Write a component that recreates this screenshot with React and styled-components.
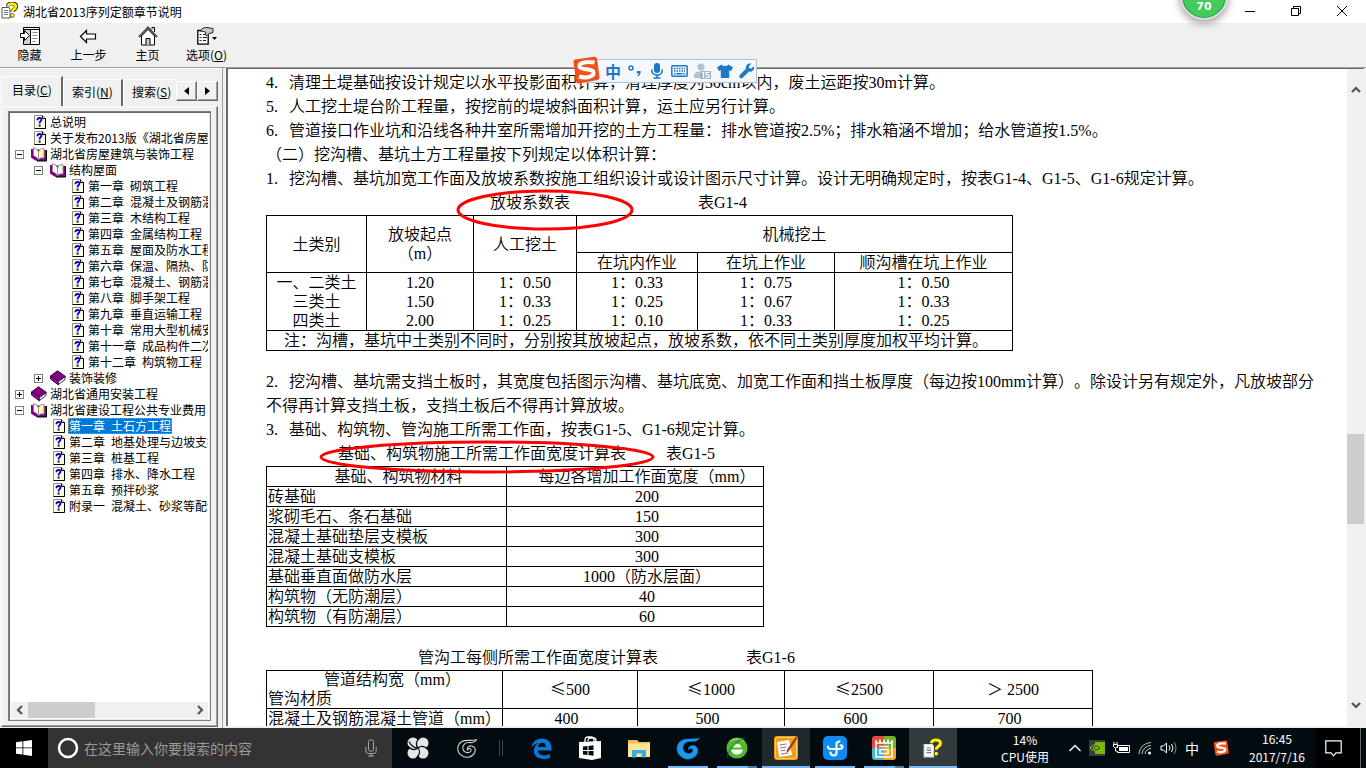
import React, { useState } from "react";
import styled, { createGlobalStyle, css } from "styled-components";

const UI_FONT = `"Noto Sans CJK SC", sans-serif`;
const DOC_FONT = `"Liberation Serif", "Noto Sans CJK SC", serif`;

const tree = [
  { level: 0, type: "page", text: "总说明" },
  { level: 0, type: "page", text: "关于发布2013版《湖北省房屋建筑" },
  { level: 0, type: "open", text: "湖北省房屋建筑与装饰工程" },
  { level: 1, type: "open", text: "结构屋面" },
  { level: 2, type: "page", text: "第一章\u2002砌筑工程" },
  { level: 2, type: "page", text: "第二章\u2002混凝土及钢筋混凝土" },
  { level: 2, type: "page", text: "第三章\u2002木结构工程" },
  { level: 2, type: "page", text: "第四章\u2002金属结构工程" },
  { level: 2, type: "page", text: "第五章\u2002屋面及防水工程" },
  { level: 2, type: "page", text: "第六章\u2002保温、隔热、防腐" },
  { level: 2, type: "page", text: "第七章\u2002混凝土、钢筋混凝土" },
  { level: 2, type: "page", text: "第八章\u2002脚手架工程" },
  { level: 2, type: "page", text: "第九章\u2002垂直运输工程" },
  { level: 2, type: "page", text: "第十章\u2002常用大型机械安拆" },
  { level: 2, type: "page", text: "第十一章\u2002成品构件二次" },
  { level: 2, type: "page", text: "第十二章\u2002构筑物工程" },
  { level: 1, type: "closed", text: "装饰装修" },
  { level: 0, type: "closed", text: "湖北省通用安装工程" },
  { level: 0, type: "open", text: "湖北省建设工程公共专业费用" },
  { level: 1, type: "page", text: "第一章\u2002土石方工程" },
  { level: 1, type: "page", text: "第二章\u2002地基处理与边坡支护" },
  { level: 1, type: "page", text: "第三章\u2002桩基工程" },
  { level: 1, type: "page", text: "第四章\u2002排水、降水工程" },
  { level: 1, type: "page", text: "第五章\u2002预拌砂浆" },
  { level: 1, type: "page", text: "附录一\u2002混凝土、砂浆等配合" },
];

const widthRows = [
  ["砖基础", "200"],
  ["浆砌毛石、条石基础", "150"],
  ["混凝土基础垫层支模板", "300"],
  ["混凝土基础支模板", "300"],
  ["基础垂直面做防水层", "1000（防水层面）"],
  ["构筑物（无防潮层）", "40"],
  ["构筑物（有防潮层）", "60"],
];

const slopeCells = [
  ["一、二类土", "三类土", "四类土"],
  ["1.20", "1.50", "2.00"],
  ["1：0.50", "1：0.33", "1：0.25"],
  ["1：0.33", "1：0.25", "1：0.10"],
  ["1：0.75", "1：0.67", "1：0.33"],
  ["1：0.50", "1：0.33", "1：0.25"],
];

export default function App() {
  const [selected, setSelected] = useState(19);
  const [tab, setTab] = useState(0);
  return (
    <Desktop lang="zh-CN">
      <GlobalStyle />
      <TitleBar>
        <HelpIcon size={17} />
        <TitleText>湖北省2013序列定额章节说明</TitleText>
        <WindowButton aria-label="最小化">
          <svg width="10" height="10" viewBox="0 0 10 10">
            <path d="M0 5.5h10" stroke="#000" />
          </svg>
        </WindowButton>
        <WindowButton aria-label="还原">
          <svg width="10" height="10" viewBox="0 0 10 10" fill="none" stroke="#000">
            <path d="M.5 2.5h7v7h-7zM2.5 2.5v-2h7v7h-2" />
          </svg>
        </WindowButton>
        <WindowButton aria-label="关闭">
          <svg width="10" height="10" viewBox="0 0 10 10" stroke="#000">
            <path d="M0 0l10 10M10 0L0 10" />
          </svg>
        </WindowButton>
      </TitleBar>
      <SpeedBall>70</SpeedBall>

      <Toolbar>
        <ToolButton>
          <HideIcon />
          隐藏
        </ToolButton>
        <ToolButton>
          <BackIcon />
          上一步
        </ToolButton>
        <ToolButton>
          <HomeIcon />
          主页
        </ToolButton>
        <ToolButton>
          <OptionsIcon />
          <span>
            选项(<u>O</u>)
          </span>
        </ToolButton>
      </Toolbar>

      <Body>
        <Sidebar>
          <Tabs>
            {[
              ["目录", "C"],
              ["索引", "N"],
              ["搜索", "S"],
            ].map(([name, key], i) => (
              <Tab key={key} $active={tab === i} onClick={() => setTab(i)}>
                {name}(<u>{key}</u>)
              </Tab>
            ))}
            <TabScroll aria-label="向左">
              <svg width="5" height="8" viewBox="0 0 5 8">
                <path d="M5 0v8L0 4z" />
              </svg>
            </TabScroll>
            <TabScroll aria-label="向右">
              <svg width="5" height="8" viewBox="0 0 5 8">
                <path d="M0 0v8l5-4z" />
              </svg>
            </TabScroll>
          </Tabs>
          <Panel>
            <TreeBox>
              <Tree>
                {tree.map((item, i) => (
                  <TreeRow key={i} $level={item.level}>
                    <Expander $hidden={item.type === "page"}>
                      <svg width="5" height="5" viewBox="0 0 5 5" stroke="#000">
                        <path d={item.type === "closed" ? "M0 2.5h5M2.5 0v5" : "M0 2.5h5"} />
                      </svg>
                    </Expander>
                    <TreeIcon type={item.type} />
                    <TreeLink href="#doc" $selected={selected === i} onClick={() => setSelected(i)}>
                      {item.text}
                    </TreeLink>
                  </TreeRow>
                ))}
              </Tree>
              <HScroll>
                <ScrollArrow d="M6 0L2 4l4 4" />
                <HTrack>
                  <HThumb />
                </HTrack>
                <ScrollArrow d="M2 0l4 4-4 4" />
              </HScroll>
            </TreeBox>
          </Panel>
        </Sidebar>
        <Splitter />
        <DocFrame>
          <Doc id="doc">
            <Line>
              <Num>4.</Num>清理土堤基础按设计规定以水平投影面积计算，清理厚度为30cm以内，废土运距按30m计算。
            </Line>
            <Line>
              <Num>5.</Num>人工挖土堤台阶工程量，按挖前的堤坡斜面积计算，运土应另行计算。
            </Line>
            <Line>
              <Num>6.</Num>管道接口作业坑和沿线各种井室所需增加开挖的土方工程量：排水管道按2.5%；排水箱涵不增加；给水管道按1.5%。
            </Line>
            <Line>（二）挖沟槽、基坑土方工程量按下列规定以体积计算：</Line>
            <Line>
              <Num>1.</Num>挖沟槽、基坑加宽工作面及放坡系数按施工组织设计或设计图示尺寸计算。设计无明确规定时，按表G1-4、G1-5、G1-6规定计算。
            </Line>
            <Caption $indent={224} $gap={128}>
              <span>放坡系数表</span>
              <span>表G1-4</span>
              <Ring $left={190} width="178" height="42" viewBox="0 0 178 42">
                <ellipse cx="89" cy="21" rx="87" ry="19" />
              </Ring>
            </Caption>
            <Table $width={747}>
              <colgroup>
                <Col $w={100} />
                <Col $w={107} />
                <Col $w={103} />
                <Col $w={121} />
                <Col $w={137} />
                <Col />
              </colgroup>
              <tbody>
                <Row $h={37}>
                  <Cell rowSpan={2}>土类别</Cell>
                  <Cell rowSpan={2}>
                    放坡起点
                    <br />
                    （m）
                  </Cell>
                  <Cell rowSpan={2}>人工挖土</Cell>
                  <Cell colSpan={3}>机械挖土</Cell>
                </Row>
                <Row $h={20}>
                  <Cell>在坑内作业</Cell>
                  <Cell>在坑上作业</Cell>
                  <Cell>顺沟槽在坑上作业</Cell>
                </Row>
                <Row $h={58}>
                  {slopeCells.map((lines, i) => (
                    <Cell key={i}>
                      {lines.map((line) => (
                        <div key={line}>{line}</div>
                      ))}
                    </Cell>
                  ))}
                </Row>
                <Row $h={20}>
                  <Cell colSpan={6} $left $indent={16}>
                    注：沟槽，基坑中土类别不同时，分别按其放坡起点，放坡系数，依不同土类别厚度加权平均计算。
                  </Cell>
                </Row>
              </tbody>
            </Table>
            <Spacer />
            <Line>
              <Num>2.</Num>挖沟槽、基坑需支挡土板时，其宽度包括图示沟槽、基坑底宽、加宽工作面和挡土板厚度（每边按100mm计算）。除设计另有规定外，凡放坡部分不得再计算支挡土板，支挡土板后不得再计算放坡。
            </Line>
            <Line>
              <Num>3.</Num>基础、构筑物、管沟施工所需工作面，按表G1-5、G1-6规定计算。
            </Line>
            <Caption $indent={72} $gap={40}>
              <span>基础、构筑物施工所需工作面宽度计算表</span>
              <span>表G1-5</span>
              <Ring $left={53} width="336" height="34" viewBox="0 0 336 34">
                <ellipse cx="168" cy="17" rx="166" ry="15" />
              </Ring>
            </Caption>
            <Table $width={498}>
              <colgroup>
                <Col $w={240} />
                <Col />
              </colgroup>
              <tbody>
                <Row $h={20}>
                  <Cell $indent={24}>基础、构筑物材料</Cell>
                  <Cell $indent={24}>每边各增加工作面宽度（mm）</Cell>
                </Row>
                {widthRows.map(([name, value]) => (
                  <Row key={name} $h={20}>
                    <Cell $left>{name}</Cell>
                    <Cell $indent={24}>{value}</Cell>
                  </Row>
                ))}
              </tbody>
            </Table>
            <Spacer />
            <Caption $indent={152} $gap={88}>
              <span>管沟工每侧所需工作面宽度计算表</span>
              <span>表G1-6</span>
            </Caption>
            <Table $width={827}>
              <colgroup>
                <Col $w={236} />
                <Col $w={135} />
                <Col $w={147} />
                <Col $w={149} />
                <Col />
              </colgroup>
              <tbody>
                <Row $h={38}>
                  <Cell $left>
                    <Shifted>管道结构宽（mm）</Shifted>
                    <div>管沟材质</div>
                  </Cell>
                  <Cell>
                    <Sign>≤</Sign>500
                  </Cell>
                  <Cell>
                    <Sign>≤</Sign>1000
                  </Cell>
                  <Cell>
                    <Sign>≤</Sign>2500
                  </Cell>
                  <Cell>
                    <Sign>＞</Sign> 2500
                  </Cell>
                </Row>
                <Row $h={20}>
                  <Cell $left>混凝土及钢筋混凝土管道（mm）</Cell>
                  <Cell $trail={8}>400</Cell>
                  <Cell $trail={8}>500</Cell>
                  <Cell $trail={8}>600</Cell>
                  <Cell $trail={8}>700</Cell>
                </Row>
              </tbody>
            </Table>
          </Doc>
          <VScroll>
            <ScrollArrow d="M0 6l4-4 4 4" />
            <VTrack>
              <VThumb />
            </VTrack>
            <ScrollArrow d="M0 2l4 4 4-4" />
          </VScroll>
        </DocFrame>
      </Body>

      <ImeBar>
        <ImeLogo>
          <SogouIcon size={28} />
        </ImeLogo>
        <ImeText>中</ImeText>
        <svg width="16" height="16" viewBox="0 0 16 16" fill="none" stroke="#1c78c8">
          <circle cx="4" cy="5" r="2" strokeWidth="1.5" />
          <path d="M10 8h3.6c.4 2.600-.8 4.600-3 5.500l-.4-.9c1-.5 1.600-1.200 1.700-2.100H10z" fill="#1c78c8" stroke="none" />
        </svg>
        <svg width="16" height="16" viewBox="0 0 16 16" fill="none" stroke="#1c78c8" strokeWidth="1.600">
          <rect x="5" y="0" width="6" height="10" rx="3" fill="#1c78c8" stroke="none" />
          <path d="M2.800 6.500v1a5.200 4.500 0 0 0 10.400 0v-1M8 12v3M4.500 15h7" />
        </svg>
        <svg width="17" height="16" viewBox="0 0 17 16" fill="none" stroke="#1c78c8" strokeWidth="1.500">
          <rect x=".8" y="2.800" width="15.400" height="10.400" rx="1" />
          <path d="M3 5.500h11M3 8h11" strokeDasharray="1.500 1" />
          <path d="M3 10.800h1.500M5.500 10.800h6M12.500 10.800H14" />
        </svg>
        <svg width="17" height="16" viewBox="0 0 17 16" fill="#b3bfd3">
          <circle cx="7" cy="4" r="3.600" />
          <path d="M0 15c0-4 1-6 4-6.500l3 1.500 3-1.500 1 .5H6v6z" />
          <rect x="6" y="8" width="11" height="8" fill="#a4b2ca" />
          <path d="M8 9.500h1.500V15M15.500 9.500h-3.500v2.500h3v2.500h-3.500" stroke="#fff" fill="none" strokeWidth="1.200" />
        </svg>
        <svg width="16" height="16" viewBox="0 0 16 16" fill="#1c78c8">
          <path d="M4.500 1.500c1.500 2 5.500 2 7 0L16 4.500 14 8l-1.800-.8V15H3.800V7.200L2 8 0 4.500z" />
        </svg>
        <svg width="16" height="16" viewBox="0 0 16 16" fill="#1c78c8">
          <path d="M14.800 3.200l-2.600 2.500-2-.6-.5-1.900L12.300.8C9.500-.2 6.300 2 7.100 5.600L.8 11.900c-1.700 2 1 4.600 2.900 2.900L10 8.600c3.400.8 6-2.200 4.800-5.400z" />
        </svg>
      </ImeBar>

      <Taskbar>
        <StartButton aria-label="开始">
          <svg width="16" height="16" viewBox="0 0 16 16" fill="#fff">
            <path d="M0 2.200L6.500 1.300v6.200H0zM7.300 1.200L16 0v7.500H7.300zM0 8.300h6.500v6.300L0 13.700zM7.300 8.300H16V16l-8.700-1.200z" />
          </svg>
        </StartButton>
        <SearchBox>
          <svg width="22" height="22" viewBox="0 0 22 22" fill="none" stroke="#fff" strokeWidth="2.500">
            <circle cx="11" cy="11" r="9" />
          </svg>
          <SearchInput placeholder="在这里输入你要搜索的内容" aria-label="搜索" />
          <svg width="12" height="18" viewBox="0 0 12 18" fill="none" stroke="#a5a5a5">
            <rect x="3.500" y="1" width="5" height="11" rx="1.500" />
            <path d="M.8 8v4q0 2.500 2.500 2.500h5.400q2.500 0 2.500-2.500V8M6 14.500V17M3 17h6" />
          </svg>
        </SearchBox>
        <TaskIcons>
          <TaskButton aria-label="风扇">
            <svg width="22" height="22" viewBox="0 0 22 22">
              <g fill="#e6e6e6">
                <circle cx="6" cy="6" r="5.500" />
                <circle cx="16" cy="6" r="5.500" />
                <circle cx="16" cy="16" r="5.500" />
                <circle cx="6" cy="16" r="5.500" />
                <path d="M5 5h12v12H5z" />
              </g>
              <path d="M11 11Q7 6 13 .5M11 11q5-4 10.500 2M11 11q4 5-2 10.500M11 11Q6 15 .5 9M11 11Q5 11 2 4.500" fill="none" stroke="#020c10" strokeWidth="1.200" />
            </svg>
          </TaskButton>
          <TaskButton aria-label="广联达">
            <GlodonIcon size={20} outline />
          </TaskButton>
          <Grip />
          <TaskButton aria-label="Edge">
            <svg width="21" height="21" viewBox="0 0 21 21" fill="#0b78d7">
              <path d="M.5 9.500C1.500 4 5 .5 10.800.5c6 0 9.700 4 9.700 9.500v2.500H7c.2 3.300 2.800 4.900 6 4.900 2.300 0 4.200-.6 6-1.700v4C17.300 20.600 15 21 12.500 21 7 21 2.800 17.900 2.800 12.600c0-3.500 2-6.300 5-7.700C4.600 5.200 2 6.800.5 9.500zM7.100 9h7.700c0-2.800-1.200-4.300-3.600-4.300C8.800 4.700 7.300 6.600 7.100 9z" />
            </svg>
          </TaskButton>
          <TaskButton aria-label="应用商店">
            <svg width="22" height="24" viewBox="0 0 22 24">
              <path d="M0 6l22-1v17l-9 2L0 22z" fill="#fff" />
              <path d="M6 9V4q0-3 3-3h3q3 0 3 3v5M9 5q0-3 2-3h4q2 0 2 3v4" fill="none" stroke="#fff" strokeWidth="1.300" />
              <path d="M4 10.500l4.500-.5v4H4zM9.500 9.900l5-.6V14h-5zM4 15h4.500v4L4 18.500zM9.500 15h5v4.700l-5-.6z" fill="#020c10" />
            </svg>
          </TaskButton>
          <TaskButton aria-label="文件资源管理器">
            <svg width="22" height="19" viewBox="0 0 22 19">
              <path d="M0 1h9l2 2h11v15H0z" fill="#f3bf55" />
              <path d="M0 4.500h22V18H0z" fill="#ffe598" />
              <path d="M4 18.500V11h14v7.500h-4.500V14.500h-5v4z" fill="#34aee2" />
            </svg>
          </TaskButton>
          <TaskButton aria-label="广联达计价" $run>
            <GlodonIcon size={24} />
          </TaskButton>
          <TaskButton aria-label="浏览器" $run $stack>
            <svg width="24" height="24" viewBox="0 0 24 24">
              <circle cx="12" cy="12" r="10.500" fill="#55b92f" />
              <path d="M4 6a10 9 0 0 1 16 0q-8-5-16 0z" fill="#9be46e" />
              <path d="M7.500 11.500a4.600 4.600 0 0 1 9 0zM6 13.500h12c-.5 3-3 5-6 5s-5.500-2-6-5z" fill="#f4fff0" />
              <path d="M22 1C13 1 1 12 2 23c2-8 9-17 20-22z" fill="#178a2b" opacity=".6" />
            </svg>
          </TaskButton>
          <TaskButton aria-label="编辑器" $run $tile="#202a2d">
            <svg width="24" height="24" viewBox="0 0 24 24">
              <rect width="24" height="24" rx="3" fill="#f29a19" />
              <rect x="1.500" y="1.500" width="21" height="21" rx="2" fill="none" stroke="#ffd36a" />
              <path d="M3 6l12-2 3 15-13 2z" fill="#fff" />
              <path d="M5.500 9l7-1M6 12l6-1M6.500 15l5-1M7 18l7-1" stroke="#8b7a62" />
              <path d="M21.500 1l2 1L15 15l-2.500 2 .5-3z" fill="#a53618" />
            </svg>
          </TaskButton>
          <TaskButton aria-label="同步" $run>
            <svg width="24" height="24" viewBox="0 0 24 24">
              <rect width="24" height="24" rx="5" fill="#0c8cf0" />
              <path d="M7.500 16.500q.5 3 3.500 3 2.500 0 2.500-3V8q0-2.500 3-2.500M5 10.500q0 2.500 3 2.500h8.500q3 0 3-2.500-.5-1.500-2-1" fill="none" stroke="#fff" strokeWidth="2" strokeLinecap="round" />
            </svg>
          </TaskButton>
          <TaskButton aria-label="图集" $run $stack>
            <svg width="24" height="24" viewBox="0 0 24 24">
              <path d="M0 3q0-3 3-3h9v12H0z" fill="#e34b3d" />
              <path d="M12 0h9q3 0 3 3v9H12z" fill="#6fb52c" />
              <path d="M0 12h12v12H3q-3 0-3-3z" fill="#44b7cf" />
              <path d="M12 12h12v9q0 3-3 3h-9z" fill="#f6a51c" />
              <path d="M4 4v17h16V4M4 7h16M8 3.500V7M12 3.500V7M16 3.500V7M7 10.500h10M8 13.500h8v4H8z" fill="none" stroke="#fff" strokeWidth="1.600" />
            </svg>
          </TaskButton>
          <TaskButton aria-label="帮助" $run $tile="#343b3f">
            <HelpIcon size={20} dark />
          </TaskButton>
        </TaskIcons>
        <CpuMeter>
          <span>14%</span>
          <span>CPU使用</span>
        </CpuMeter>
        <Tray>
          <svg width="12" height="8" viewBox="0 0 12 8" fill="none" stroke="#fff" strokeWidth="1.400">
            <path d="M.5 7L6 1.500 11.500 7" />
          </svg>
          <svg width="16" height="16" viewBox="0 0 16 16">
            <rect width="16" height="16" fill="#383d40" />
            <path d="M6 2h10v12H6z" fill="#76b900" />
            <path d="M1 8q5-7 12 0-6 6-12 0zM4 8q3-4 6 0-3 3-6 0z" fill="none" stroke="#8ed000" />
            <path d="M6 6q3-1 5 2-2 2-5 2" fill="none" stroke="#26340a" />
          </svg>
          <svg width="17" height="12" viewBox="0 0 17 12" fill="none" stroke="#fff">
            <path d="M4.500 6V3.500h12v7h-12V9" />
            <rect x="6" y="5" width="9" height="4" fill="#fff" stroke="none" />
            <path d="M1 0v3M4 0v3M.5 2.500h4v2l-2 1.500-2-1.500zM2.500 6v3H4" />
          </svg>
          <svg width="14" height="14" viewBox="0 0 14 14" fill="none" stroke="#bfc4c6">
            <path d="M1 13A12 12 0 0 1 13 1.500M4 13a9 9 0 0 1 9-8.500M7 13a6 6 0 0 1 6-5.500" />
            <circle cx="11.500" cy="12" r="1.500" fill="#fff" stroke="none" />
          </svg>
          <svg width="17" height="14" viewBox="0 0 17 14" fill="none" stroke="#fff">
            <path d="M1 5h2.500L6.500 2v10L3.500 9H1z" />
            <path d="M9 4.500q2 2.500 0 5M11.500 3q3 4 0 8" />
            <path d="M14 1q4 6 0 12" stroke="#888" />
          </svg>
          <TrayText>中</TrayText>
          <SogouIcon size={16} />
        </Tray>
        <Clock>
          <span>16:45</span>
          <span>2017/7/16</span>
        </Clock>
        <ActionButton aria-label="操作中心">
          <svg width="17" height="17" viewBox="0 0 17 17" fill="none" stroke="#fff" strokeWidth="1.200">
            <path d="M.8.8h15.400v12H11l-2.500 3-2.500-3H.8z" />
          </svg>
        </ActionButton>
      </Taskbar>
    </Desktop>
  );
}

function HelpIcon({ size, dark }) {
  return (
    <svg width={size} height={size} viewBox="0 0 17 17">
      <path d="M1 5.500h7l1 2V16H1z" fill="#fff" stroke={dark ? "#ddd" : "#555"} />
      <path d="M3 8.500h4M3 10.500h4M3 12.500h4" stroke="#777" />
      <path d="M7 4.500Q7 1.500 11 1.500t4 3q0 2-2 3-1.500.8-1.500 2.500" fill="none" stroke="#333" strokeWidth="4.200" />
      <path d="M7.200 4.500Q7.200 1.700 11 1.700t3.800 2.800q0 1.800-2 2.900-1.500.8-1.500 2.600" fill="none" stroke="#ffee00" strokeWidth="2.600" />
      <circle cx="11.300" cy="13.500" r="2.200" fill="#333" />
      <circle cx="11.300" cy="13.300" r="1.600" fill="#ffee00" />
    </svg>
  );
}

function HideIcon() {
  return (
    <svg width="20" height="20" viewBox="0 0 20 20">
      <path d="M3.500 1.500h16v17h-16z" fill="#fff" stroke="#000" />
      <path d="M4 4h6v14H4z" fill="#d0d0d0" />
      <path d="M3 3.500h16M10.500 3v15" stroke="#000" />
      <path d="M12.500 6.500h5M12.500 9.500h5M12.500 12.500h5M12.500 15.500h3" stroke="#888" />
      <path d="M.5 7.500h4v-3l5 5-5 5v-3h-4z" fill="#fff" stroke="#000" />
    </svg>
  );
}

function BackIcon() {
  return (
    <svg width="20" height="20" viewBox="0 0 20 20">
      <path d="M1.500 10.500l6-6V8h9v5h-9v3.500z" fill="#fff" stroke="#000" strokeWidth="1.200" />
    </svg>
  );
}

function HomeIcon() {
  return (
    <svg width="20" height="20" viewBox="0 0 20 20">
      <path d="M3.500 10v9h13v-9L10 3.500z" fill="#fff" stroke="#000" />
      <path d="M14 3.500V1.500h2.500V6" fill="#fff" stroke="#000" />
      <path d="M1 11l9-9.500L19 11" fill="none" stroke="#000" strokeWidth="1.800" />
      <path d="M1.500 10.500l8.500-9 8.500 9" fill="none" stroke="#fff" strokeWidth=".5" />
      <path d="M8 19v-6.500h4V19" fill="#c8c8c8" stroke="#000" />
    </svg>
  );
}

function OptionsIcon() {
  return (
    <svg width="20" height="20" viewBox="0 0 20 20">
      <path d="M.8 4.500h10.400v13.700H.8z" fill="#fff" stroke="#000" strokeWidth="1.300" />
      <path d="M2.500 8.500h2M6 8.500h4M2.500 11.500h2M6 11.500h4M2.500 14.500h2M6 14.500h3" stroke="#222" />
      <path d="M3 5l3-3 4-.5 6 1v4l-4 1-2 2-2-1 1-2-2-1z" fill="#c9c9c9" stroke="#000" strokeWidth=".8" />
      <path d="M15 11h5l-2.500 3z" fill="#000" />
    </svg>
  );
}

function TreeIcon({ type }) {
  if (type === "page") {
    return (
      <svg width="16" height="16" viewBox="0 0 16 16">
        <path d="M3.500 1.500h8l3 3v10h-11z" fill="#fffccf" stroke="#909090" />
        <path d="M11.500 1.500v3h3v10h-11" fill="none" stroke="#000" />
        <path d="M6.500 6.200V5.500Q6.500 4 8.500 4t2 1.500q0 1-1 1.700T8.600 9.500" fill="none" stroke="#0000e0" strokeWidth="1.800" />
        <path d="M7.600 10.600h2v2h-2z" fill="#0000e0" />
      </svg>
    );
  }
  if (type === "open") {
    return (
      <svg width="16" height="16" viewBox="0 0 16 16">
        <path d="M.5 3v8.500l5 3h9.500V4" fill="#800080" stroke="#800080" />
        <path d="M2.500 1.500q4 1 5 4.500v7.500q-2-3-5-4z" fill="#fff" stroke="#909090" />
        <path d="M7.500 6Q9 2 13 2.500V12q-4-1-5.500 1.500z" fill="#fff" stroke="#909090" />
        <path d="M9.500 5v6M11.500 4v6.500" stroke="#ffe93b" strokeDasharray="1 1" />
        <path d="M15.500 4v11H6" fill="none" stroke="#000" />
      </svg>
    );
  }
  return (
    <svg width="16" height="16" viewBox="0 0 16 16">
      <path d="M.5 6L7.500.8l8 5.700-7 5z" fill="#800080" stroke="#400040" />
      <path d="M.5 6v3l8 6v-3.500z" fill="#a000a0" stroke="#400040" />
      <path d="M8.500 11.500l6.500-4.500v2.500L8.500 14.500z" fill="#fff" stroke="#333" />
    </svg>
  );
}

function GlodonIcon({ size, outline }) {
  return (
    <svg width={size} height={size} viewBox="0 0 24 24" fill={outline ? "none" : "#2197ec"} stroke={outline ? "#d0d4d5" : "#0876cf"} strokeWidth={outline ? 1.3 : 0.6}>
      <path d="M23.500 2Q21 6 15 5.500C10 5 6.500 8.500 7 12.500c.5 4 4.500 6 8 4.500 2.500-1.200 2.500-4 .5-4.500-1.500-.3-2.500.5-3 1.500-.5-3 2-5 5-4.500 4 .5 5.500 4.500 3.500 8.500-3 5.500-11 7-16 2.500C-1 16 0 8 5.500 4.500 10 1.500 17 4 23.500 2z" />
    </svg>
  );
}

function SogouIcon({ size }) {
  return (
    <svg width={size} height={size} viewBox="0 0 28 28">
      <path d="M1.500 6Q1 4 3 3.500L22 .8q2.500-.3 3 2L27.500 21q.3 2.500-2 3L7 27.500q-2.500.3-3-2z" fill="#f0501c" />
      <path d="M22.500 6.500C15 5 7 6.500 7.500 10.500c.5 4 13.500 1.500 14 6 .5 4.500-8 6-14.500 4" fill="none" stroke="#fff" strokeWidth="4" />
    </svg>
  );
}

function ScrollArrow({ d }) {
  return (
    <ArrowButton aria-label="滚动">
      <svg width="10" height="10" viewBox="-1 -1 10 10" fill="none" stroke="#555" strokeWidth="2.200">
        <path d={d} />
      </svg>
    </ArrowButton>
  );
}

const GlobalStyle = createGlobalStyle`
  * {
    box-sizing: border-box;
  }
  body {
    margin: 0;
    overflow: hidden;
    font-family: ${UI_FONT};
    font-size: 12px;
    color: #000;
    text-spacing-trim: space-all;
  }
  button, input {
    font: inherit;
    color: inherit;
    border: 0;
    padding: 0;
    background: none;
  }
  svg {
    flex: none;
  }
`;

const Desktop = styled.div`
  display: flex;
  flex-direction: column;
  position: relative;
  height: 100vh;
  overflow: hidden;
  background: #f0f0f0;
`;

const TitleBar = styled.header`
  display: flex;
  align-items: flex-start;
  height: 23px;
  flex: none;
  padding: 2px 1px 0;
  background: #fff;
`;

const TitleText = styled.span`
  flex: 1;
  padding-left: 5px;
  line-height: 20px;
`;

const WindowButton = styled.button`
  display: flex;
  align-items: center;
  justify-content: center;
  width: 46px;
  height: 17px;
`;

const SpeedBall = styled.div`
  position: absolute;
  top: -28px;
  right: 138px;
  width: 48px;
  height: 48px;
  display: flex;
  align-items: flex-end;
  justify-content: center;
  padding-bottom: 4px;
  border: 2px solid #dcdcdc;
  border-radius: 50%;
  background: #43cb5c;
  box-shadow: inset 0 0 0 1px #199d50, 0 3px 8px rgba(0, 0, 0, 0.4);
  color: #fff;
  font-family: "DejaVu Sans", sans-serif;
  font-weight: bold;
  font-size: 11px;
  line-height: 14px;
`;

const Toolbar = styled.nav`
  display: flex;
  height: 45px;
  flex: none;
  border-bottom: 1px solid #a0a0a0;
`;

const ToolButton = styled.button`
  display: flex;
  flex-direction: column;
  align-items: center;
  width: 59px;
  padding-top: 3px;
  line-height: 18px;
`;

const Body = styled.div`
  display: flex;
  flex: 1;
  min-height: 0;
`;

const Sidebar = styled.aside`
  display: flex;
  flex-direction: column;
  width: 218px;
  flex: none;
  padding: 7px 0 1px 1px;
  border-top: 1px solid #fff;
`;

const Tabs = styled.div`
  display: flex;
  align-items: center;
  height: 30px;
  flex: none;
`;

const Tab = styled.button`
  align-self: flex-end;
  width: ${(p) => (p.$active ? 62 : 60)}px;
  height: ${(p) => (p.$active ? 30 : 27)}px;
  padding-left: ${(p) => (p.$active ? 10 : 8)}px;
  padding-bottom: 4px;
  text-align: left;
  white-space: nowrap;
  overflow: hidden;
  border-top: 1px solid #fff;
  border-left: 1px solid #fff;
  border-right: 2px solid #696969;
  &:nth-child(3) {
    width: 53px;
    border-right: 0;
  }
`;

const TabScroll = styled.button`
  display: flex;
  align-items: center;
  justify-content: center;
  width: 21px;
  height: 20px;
  flex: none;
  border: 1px solid;
  border-color: #fff #696969 #696969 #fff;
  box-shadow: inset -1px -1px #a0a0a0;
`;

const Panel = styled.div`
  display: flex;
  flex: 1;
  min-height: 0;
  padding: 4px 6px 5px;
  border: 1px solid;
  border-color: #fff #696969 #696969 #fff;
  box-shadow: inset -1px -1px #a0a0a0;
`;

const TreeBox = styled.div`
  display: flex;
  flex-direction: column;
  flex: 1;
  min-width: 0;
  padding: 2px;
  border: 1px solid #808080;
  box-shadow: inset 1px 1px #696969, inset -1px -1px #e3e3e3;
  background: #fff;
`;

const Tree = styled.ul`
  flex: 1;
  margin: 0;
  padding: 0;
  list-style: none;
  overflow: hidden;
`;

const TreeRow = styled.li`
  display: flex;
  align-items: center;
  height: 16px;
  padding-left: ${(p) => 4 + p.$level * 19}px;
`;

const Expander = styled.span`
  display: flex;
  align-items: center;
  justify-content: center;
  width: 9px;
  height: 9px;
  flex: none;
  margin-right: 7px;
  border: 1px solid #808080;
  visibility: ${(p) => (p.$hidden ? "hidden" : "visible")};
`;

const TreeLink = styled.a`
  margin-left: 2px;
  padding: 0 1px;
  line-height: 16px;
  font-family: ${UI_FONT};
  white-space: nowrap;
  text-decoration: none;
  color: #000;
  ${(p) =>
    p.$selected &&
    css`
      background: #0078d7;
      color: #fff;
      outline: 1px dotted #ff8728;
      outline-offset: -1px;
    `}
`;

const HScroll = styled.div`
  display: flex;
  height: 16px;
  flex: none;
  background: #f0f0f0;
`;

const ArrowButton = styled.button`
  display: flex;
  align-items: center;
  justify-content: center;
  width: 17px;
  flex: none;
`;

const HTrack = styled.div`
  display: flex;
  flex: 1;
`;

const HThumb = styled.div`
  width: 67px;
  background: #cdcdcd;
`;

const Splitter = styled.div`
  width: 4px;
  flex: none;
  margin-left: 4px;
  border-left: 1px solid #a0a0a0;
`;

const DocFrame = styled.main`
  display: flex;
  flex: 1;
  min-width: 0;
  margin: 0 2px 2px 0;
  border-top: 1px solid #696969;
  border-left: 2px solid #696969;
  background: #fff;
`;

const Doc = styled.article`
  flex: 1;
  min-width: 0;
  overflow: hidden;
  padding: 2px 26px 0 38px;
  font-family: ${DOC_FONT};
  font-size: 16px;
  font-weight: 350;
`;

const Line = styled.p`
  margin: 0;
  line-height: 24px;
`;

const Num = styled.span`
  display: inline-block;
  width: 23px;
`;

const Caption = styled.div`
  display: flex;
  position: relative;
  gap: ${(p) => p.$gap}px;
  padding-left: ${(p) => p.$indent}px;
  line-height: 24px;
`;

const Ring = styled.svg`
  position: absolute;
  top: -2px;
  left: ${(p) => p.$left}px;
  fill: none;
  stroke: #f00;
  stroke-width: 3px;
`;

const Spacer = styled.div`
  height: 19px;
`;

const Table = styled.table`
  width: ${(p) => p.$width}px;
  table-layout: fixed;
  border-collapse: collapse;
  line-height: 19px;
`;

const Col = styled.col`
  width: ${(p) => (p.$w ? `${p.$w}px` : "auto")};
`;

const Row = styled.tr`
  height: ${(p) => p.$h}px;
`;

const Cell = styled.td`
  padding: 0 ${(p) => p.$trail || 1}px 0 1px;
  border: 1px solid #000;
  text-align: ${(p) => (p.$left ? "left" : "center")};
  text-indent: ${(p) => p.$indent || 0}px;
  white-space: nowrap;
`;

const Shifted = styled.div`
  padding-left: 56px;
  line-height: 18px;
`;

const Sign = styled.span`
  display: inline-block;
  min-width: 16px;
  font-family: "Noto Sans CJK SC", sans-serif;
  line-height: 16px;
`;

const VScroll = styled.div`
  display: flex;
  flex-direction: column;
  width: 17px;
  flex: none;
  padding: 16px 0;
  background: #f0f0f0;
`;

const VTrack = styled.div`
  flex: 1;
  padding-top: 339px;
`;

const VThumb = styled.div`
  height: 90px;
  background: #cdcdcd;
`;

const ImeBar = styled.div`
  position: absolute;
  top: 59px;
  left: 585px;
  display: flex;
  align-items: center;
  gap: 6px;
  width: 172px;
  height: 24px;
  padding-left: 19px;
  border: 1px solid #a9c4dc;
  background: #f5f9fd;
`;

const ImeLogo = styled.span`
  position: absolute;
  top: -4px;
  left: -14px;
  display: flex;
`;

const ImeText = styled.span`
  width: 16px;
  color: #1c78c8;
  font-size: 16px;
  font-weight: bold;
  line-height: 22px;
`;

const Taskbar = styled.footer`
  display: flex;
  height: 40px;
  flex: none;
  background: #020c10;
  color: #fff;
`;

const StartButton = styled.button`
  display: flex;
  align-items: center;
  justify-content: center;
  width: 48px;
  background: #000;
`;

const SearchBox = styled.label`
  display: flex;
  align-items: center;
  width: 344px;
  padding: 0 15px 0 9px;
  background: #333;
`;

const SearchInput = styled.input`
  flex: 1;
  min-width: 0;
  padding-left: 5px;
  font-size: 14px;
  outline: none;
  &::placeholder {
    color: #9a9a9a;
    opacity: 1;
  }
`;

const TaskIcons = styled.div`
  display: flex;
  flex: 1;
  gap: 1px;
  padding-left: 2px;
`;

const TaskButton = styled.button`
  display: flex;
  align-items: center;
  justify-content: center;
  position: relative;
  width: 48px;
  background: ${(p) => p.$tile || "none"};
  ${(p) =>
    p.$run &&
    css`
      &::after {
        content: "";
        position: absolute;
        bottom: 0;
        left: ${p.$tile ? 0 : 4}px;
        right: ${p.$tile ? 0 : 4}px;
        height: 2px;
        background: ${p.$stack ? "linear-gradient(to right, #76b9f7 31px, #4e7ba5 31px)" : "#76b9f7"};
      }
    `}
`;

const Grip = styled.span`
  width: 4px;
  height: 16px;
  align-self: center;
  margin: 0 13px 0 7px;
  border: 1px solid #3c4447;
  border-width: 0 1px;
`;

const CpuMeter = styled.div`
  display: flex;
  flex-direction: column;
  align-items: center;
  width: 60px;
  padding-top: 3px;
  line-height: 17px;
`;

const Tray = styled.div`
  display: flex;
  align-items: center;
  gap: 8px;
  width: 183px;
  padding-left: 14px;
`;

const TrayText = styled.span`
  width: 14px;
  font-size: 14px;
  margin-right: 6px;
`;

const Clock = styled.time`
  display: flex;
  flex-direction: column;
  align-items: center;
  width: 78px;
  padding-top: 2px;
  line-height: 18px;
`;

const ActionButton = styled.button`
  display: flex;
  align-items: center;
  justify-content: center;
  width: 45px;
  margin-right: 5px;
  padding-right: 10px;
  border-right: 1px solid #666;
  background: #000;
`;
